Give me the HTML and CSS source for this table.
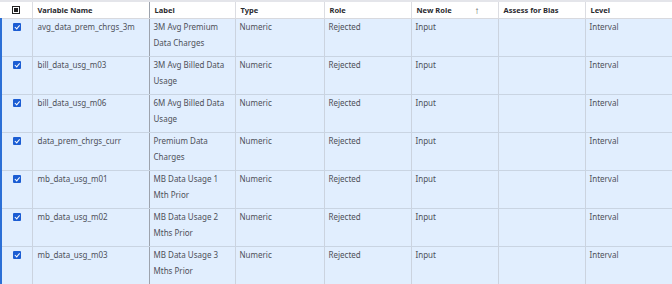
FILE: index.html
```html
<!DOCTYPE html>
<html>
<head>
<meta charset="utf-8">
<link rel="stylesheet" href="styles.css">
</head>
<body>
<div class="grid">
<table class="tbl">
  <colgroup>
    <col class="c-chk"><col class="c-name"><col class="c-label"><col class="c-type"><col class="c-role"><col class="c-new"><col class="c-bias"><col class="c-level">
  </colgroup>
  <thead>
    <tr>
      <th class="chk-cell"><span class="cb cb-partial"></span></th>
      <th class="pin">Variable Name</th>
      <th>Label</th>
      <th>Type</th>
      <th>Role</th>
      <th><div class="sort">New Role <span class="arrow">↑</span></div></th>
      <th>Assess for Bias</th>
      <th>Level</th>
    </tr>
  </thead>
  <tbody>
    <tr><td class="chk-cell"><span class="cb cb-on"></span></td><td class="pin">avg_data_prem_chrgs_3m</td><td>3M Avg Premium Data Charges</td><td>Numeric</td><td>Rejected</td><td>Input</td><td></td><td>Interval</td></tr>
    <tr><td class="chk-cell"><span class="cb cb-on"></span></td><td class="pin">bill_data_usg_m03</td><td>3M Avg Billed Data Usage</td><td>Numeric</td><td>Rejected</td><td>Input</td><td></td><td>Interval</td></tr>
    <tr><td class="chk-cell"><span class="cb cb-on"></span></td><td class="pin">bill_data_usg_m06</td><td>6M Avg Billed Data Usage</td><td>Numeric</td><td>Rejected</td><td>Input</td><td></td><td>Interval</td></tr>
    <tr><td class="chk-cell"><span class="cb cb-on"></span></td><td class="pin">data_prem_chrgs_curr</td><td>Premium Data Charges</td><td>Numeric</td><td>Rejected</td><td>Input</td><td></td><td>Interval</td></tr>
    <tr><td class="chk-cell"><span class="cb cb-on"></span></td><td class="pin">mb_data_usg_m01</td><td>MB Data Usage 1 Mth Prior</td><td>Numeric</td><td>Rejected</td><td>Input</td><td></td><td>Interval</td></tr>
    <tr><td class="chk-cell"><span class="cb cb-on"></span></td><td class="pin">mb_data_usg_m02</td><td>MB Data Usage 2 Mths Prior</td><td>Numeric</td><td>Rejected</td><td>Input</td><td></td><td>Interval</td></tr>
    <tr><td class="chk-cell"><span class="cb cb-on"></span></td><td class="pin">mb_data_usg_m03</td><td>MB Data Usage 3 Mths Prior</td><td>Numeric</td><td>Rejected</td><td>Input</td><td></td><td>Interval</td></tr>
  </tbody>
</table>
</div>
</body>
</html>
```

FILE: styles.css
```css
html, body {
  margin: 0;
  padding: 0;
  background: #ffffff;
}
body {
  font-family: "Noto Sans", "Open Sans", sans-serif;
  width: 672px;
  height: 284px;
  overflow: hidden;
}
.grid {
  border-top: 2px solid #e4e5ea;
  width: 672px;
}
.tbl {
  border-collapse: collapse;
  table-layout: fixed;
  width: 672px;
}
.c-chk { width: 31px; }
.c-name { width: 117px; }
.c-label { width: 86px; }
.c-type { width: 89px; }
.c-role { width: 87px; }
.c-new { width: 87px; }
.c-bias { width: 87px; }
.c-level { width: 88px; }

th {
  height: 16px;
  padding: 0 5px;
  text-align: left;
  font-size: 7.5px;
  font-weight: 700;
  color: #2a2a2e;
  background: #ffffff;
  border-right: 1px solid #dcdde2;
  border-bottom: 1px solid #d8d9de;
  white-space: nowrap;
  vertical-align: middle;
}
th.pin, td.pin { border-right: 1px solid #9da3ad; }
th:last-child, td:last-child { border-right: 2px solid #d4d6dc; }

td {
  height: 37.6px;
  box-sizing: border-box;
  padding: 0 4px 5px 4px;
  font-size: 8px;
  line-height: 16px;
  color: #4e5059;
  background: #e1eefe;
  border-right: 1px solid #cbd3df;
  border-bottom: 1px solid #c9d4e2;
  vertical-align: top;
}
td.pin { padding-left: 5px; }
td.chk-cell {
  border-left: 2px solid #2b6fd6;
}
.chk-cell {
  text-align: center;
  padding: 0;
}
.cb {
  display: block;
  margin: 0 auto;
  width: 8px;
  height: 8px;
  box-sizing: border-box;
  position: relative;
}
td .cb { margin-top: 4px; }
.cb-partial {
  border: 1px solid #222;
  background: #fff;
}
.cb-partial::after {
  content: "";
  position: absolute;
  left: 1px; top: 1px;
  width: 4px; height: 4px;
  background: #222;
}
.cb-on {
  background: #1b5dd3;
  border-radius: 1px;
}
.cb-on::after {
  content: "";
  position: absolute;
  left: 3px;
  top: 1px;
  width: 1.5px;
  height: 3.5px;
  border: solid #fff;
  border-width: 0 1.5px 1.5px 0;
  transform: rotate(40deg);
}
.sort {
  display: flex;
  justify-content: space-between;
  align-items: center;
  padding-right: 13px;
}
.arrow {
  font-weight: 400;
  font-size: 10px;
  line-height: 10px;
  color: #555;
}
```
